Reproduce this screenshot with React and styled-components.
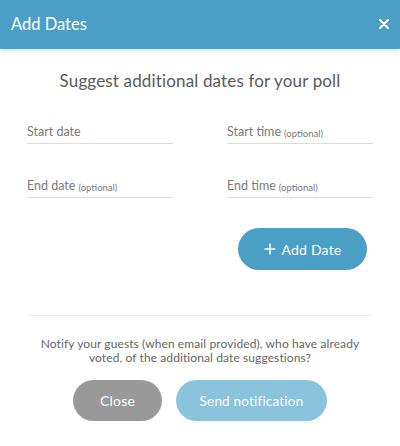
import React from "react";
import styled, { createGlobalStyle } from "styled-components";

const Global = createGlobalStyle`
  html, body { margin: 0; padding: 0; background: #fff; }
  body { font-family: "Lato", "Noto Sans", sans-serif; }
  * { box-sizing: border-box; }
`;

const Modal = styled.div`
  width: 400px;
  height: 446px;
  background: #fff;
  display: flex;
  flex-direction: column;
  overflow: hidden;
`;

const Header = styled.div`
  height: 49px;
  background: #4b9fc5;
  display: flex;
  align-items: center;
  justify-content: space-between;
  padding: 0 10px 2px 11px;
  box-shadow: 0 2px 5px rgba(0, 0, 0, 0.12);
  position: relative;
  z-index: 1;
`;

const Title = styled.h1`
  margin: 0;
  font-size: 16.5px;
  font-weight: 400;
  color: #fff;
`;

const CloseX = styled.button`
  border: 0;
  background: none;
  padding: 0;
  width: 12px;
  height: 12px;
  display: flex;
  align-items: center;
  justify-content: center;
  cursor: pointer;
`;

const Body = styled.div`
  padding: 21px 27px 0 27px;
  display: flex;
  flex-direction: column;
`;

const Subtitle = styled.p`
  margin: 0;
  text-align: center;
  font-size: 17px;
  color: #5a5a5a;
  letter-spacing: 0.15px;
`;

const FieldGrid = styled.div`
  display: grid;
  grid-template-columns: 146px 146px;
  justify-content: space-between;
  row-gap: 30px;
  margin-top: 29px;
`;

const Field = styled.div`
  height: 24px;
  border-bottom: 1px solid #dcdcdc;
  display: flex;
  align-items: flex-end;
  padding-bottom: 4px;
  font-size: 12.5px;
  color: #7a7a7a;
  white-space: nowrap;
`;

const Optional = styled.span`
  font-size: 9.5px;
  margin-left: 3px;
  color: #7a7a7a;
`;

const AddRow = styled.div`
  display: flex;
  justify-content: flex-end;
  margin-top: 30px;
  padding-right: 6px;
`;

const Pill = styled.button`
  border: 0;
  border-radius: 21px;
  height: ${(p) => p.$h || 42}px;
  width: ${(p) => p.$w}px;
  background: ${(p) => p.$bg};
  color: #fff;
  font-family: inherit;
  font-size: ${(p) => p.$fs || 14}px;
  display: flex;
  align-items: center;
  justify-content: center;
  gap: 6px;
  cursor: pointer;
  letter-spacing: 0.2px;
`;

const Divider = styled.hr`
  border: 0;
  border-top: 1px solid #ececec;
  margin: 45px 1px 0 1px;
`;

const Notice = styled.p`
  margin: 21px 0 0 0;
  text-align: center;
  font-size: 12px;
  line-height: 14px;
  color: #666;
  letter-spacing: 0.1px;
`;

const Actions = styled.div`
  display: flex;
  justify-content: center;
  gap: 14px;
  margin-top: 15px;
`;

export default function App() {
  return (
    <>
      <Global />
      <Modal>
        <Header>
          <Title>Add Dates</Title>
          <CloseX aria-label="Close">
            <svg width="10" height="10" viewBox="0 0 10 10">
              <path d="M1 1L9 9M9 1L1 9" stroke="#fff" strokeWidth="2.2" strokeLinecap="round" />
            </svg>
          </CloseX>
        </Header>
        <Body>
          <Subtitle>Suggest additional dates for your poll</Subtitle>
          <FieldGrid>
            <Field>Start date</Field>
            <Field>
              Start time<Optional>(optional)</Optional>
            </Field>
            <Field>
              End date<Optional>(optional)</Optional>
            </Field>
            <Field>
              End time<Optional>(optional)</Optional>
            </Field>
          </FieldGrid>
          <AddRow>
            <Pill $w={129} $bg="#4b9fc5">
              <svg width="12" height="12" viewBox="0 0 12 12">
                <path d="M6 0.5V11.5M0.5 6H11.5" stroke="#fff" strokeWidth="1.6" />
              </svg>
              Add Date
            </Pill>
          </AddRow>
          <Divider />
          <Notice>
            Notify your guests (when email provided), who have already
            <br />
            voted, of the additional date suggestions?
          </Notice>
          <Actions>
            <Pill $w={89} $h={41} $bg="#999999">Close</Pill>
            <Pill $w={151} $h={41} $fs={13.5} $bg="#8bc2dc">Send notification</Pill>
          </Actions>
        </Body>
      </Modal>
    </>
  );
}
